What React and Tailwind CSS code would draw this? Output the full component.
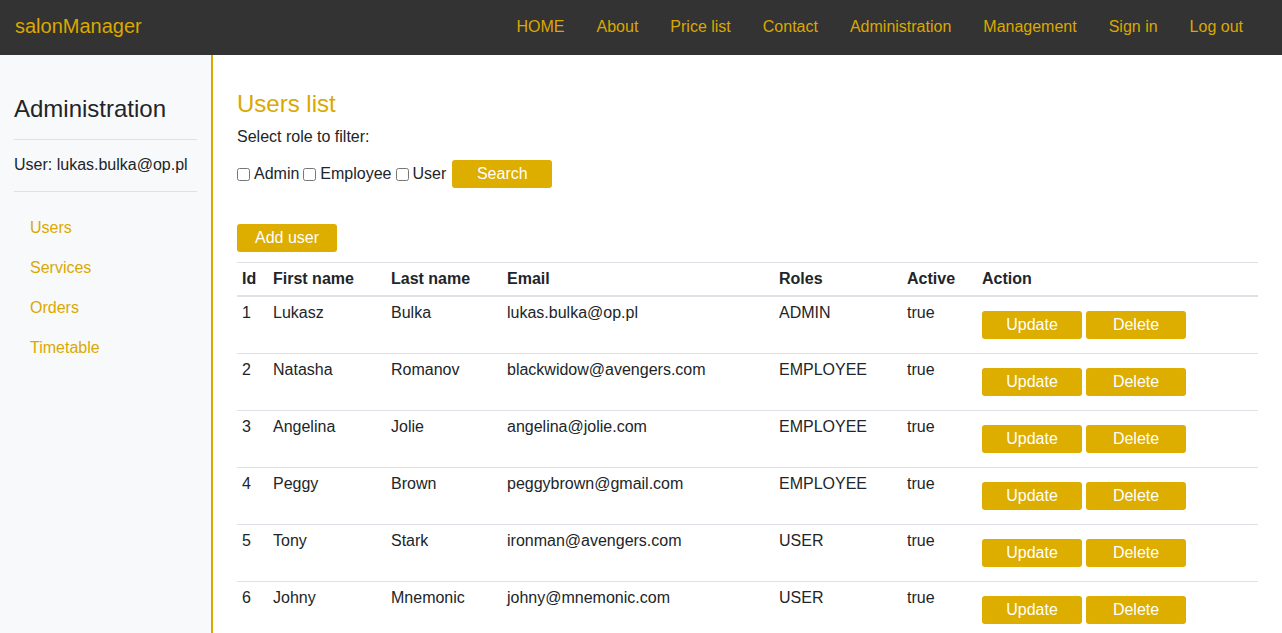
import React from "react";

const gold = "text-[#daa800]";

const navLinks = [
  "HOME",
  "About",
  "Price list",
  "Contact",
  "Administration",
  "Management",
  "Sign in",
  "Log out",
];

const sideLinks = ["Users", "Services", "Orders", "Timetable"];

const users = [
  { id: 1, first: "Lukasz", last: "Bulka", email: "lukas.bulka@op.pl", role: "ADMIN" },
  { id: 2, first: "Natasha", last: "Romanov", email: "blackwidow@avengers.com", role: "EMPLOYEE" },
  { id: 3, first: "Angelina", last: "Jolie", email: "angelina@jolie.com", role: "EMPLOYEE" },
  { id: 4, first: "Peggy", last: "Brown", email: "peggybrown@gmail.com", role: "EMPLOYEE" },
  { id: 5, first: "Tony", last: "Stark", email: "ironman@avengers.com", role: "USER" },
  { id: 6, first: "Johny", last: "Mnemonic", email: "johny@mnemonic.com", role: "USER" },
];

const GoldButton = ({ children, className = "" }) => (
  <button
    className={`w-[100px] h-[28px] rounded-[3px] bg-[#ddad00] text-white text-[16px] leading-[28px] ${className}`}
  >
    {children}
  </button>
);

// widths of the table columns, left to right
const cols = ["w-[31px]", "w-[118px]", "w-[116px]", "w-[272px]", "w-[128px]", "w-[75px]", "flex-1"];

export default function App() {
  return (
    <div className="min-h-screen flex flex-col font-['Liberation_Sans',Arial,sans-serif] text-[#212529] text-[16px] leading-[24px]">
      {/* Navbar */}
      <nav className="h-[55px] shrink-0 bg-[#333333] flex items-center justify-between pl-[15px] pr-[23px]">
        <span className={`text-[20px] pb-[3px] ${gold}`}>salonManager</span>
        <ul className="flex pb-[2px]">
          {navLinks.map((l) => (
            <li key={l}>
              <a className={`px-4 ${gold}`} href="#">
                {l}
              </a>
            </li>
          ))}
        </ul>
      </nav>

      <div className="flex flex-1">
        {/* Sidebar */}
        <aside className="w-[213px] shrink-0 bg-[#f8f9fa] border-r-2 border-[#daa800] px-[14px] pt-[39px]">
          <h3 className="text-[24px] leading-[29px] mb-4">Administration</h3>
          <div className="border-t border-[#dee2e6] pt-[13px] pb-[14px]">User: lukas.bulka@op.pl</div>
          <ul className="border-t border-[#dee2e6] pt-[16px]">
            {sideLinks.map((l) => (
              <li key={l}>
                <a className={`block px-4 py-2 ${gold}`} href="#">
                  {l}
                </a>
              </li>
            ))}
          </ul>
        </aside>

        {/* Main */}
        <main className="flex-1 px-6 pt-[34px]">
          <h3 className={`text-[24px] leading-[29px] mb-[7px] ${gold}`}>Users list</h3>
          <p>Select role to filter:</p>
          <div className="flex items-center mt-[11px] h-[28px]">
            {["Admin", "Employee", "User"].map((r) => (
              <label key={r} className="flex items-center mr-[4px]">
                <input type="checkbox" className="m-0 mr-[4px] w-[13px] h-[13px]" />
                {r}
              </label>
            ))}
            <GoldButton className="ml-[2px]">Search</GoldButton>
          </div>

          <div className="mt-[36px]">
            <GoldButton>Add user</GoldButton>
          </div>

          {/* Table */}
          <div className="mt-[10px] w-[1021px] border-t border-[#dee2e6]">
            <div className="flex font-bold border-b-2 border-[#dee2e6] h-[34px] items-center">
              {["Id", "First name", "Last name", "Email", "Roles", "Active", "Action"].map((h, i) => (
                <div key={h} className={`${cols[i]} px-[5px]`}>
                  {h}
                </div>
              ))}
            </div>
            {users.map((u, idx) => (
              <div
                key={u.id}
                className={`flex ${idx > 0 ? "h-[57px] border-t border-[#dee2e6]" : "h-[56px]"}`}
              >
                {[u.id, u.first, u.last, u.email, u.role, "true"].map((v, i) => (
                  <div key={i} className={`${cols[i]} px-[5px] pt-[4px]`}>
                    {v}
                  </div>
                ))}
                <div className={`${cols[6]} px-[5px] pt-[14px] flex gap-[4px] items-start`}>
                  <GoldButton>Update</GoldButton>
                  <GoldButton>Delete</GoldButton>
                </div>
              </div>
            ))}
          </div>
        </main>
      </div>
    </div>
  );
}
